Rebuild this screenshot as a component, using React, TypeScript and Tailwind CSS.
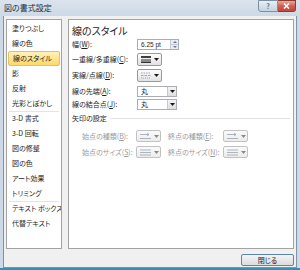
import type { ReactNode } from 'react';

const LIST: (string | null)[] = [
  '塗りつぶし',
  '線の色',
  '線のスタイル',
  '影',
  '反射',
  '光彩とぼかし',
  null,
  '3-D 書式',
  '3-D 回転',
  '図の修整',
  '図の色',
  'アート効果',
  'トリミング',
  null,
  'テキスト ボックス',
  '代替テキスト',
];

function Caret({ gray = false }: { gray?: boolean }) {
  return (
    <svg width="5" height="3" viewBox="0 0 5 3" className="shrink-0">
      <path d="M0 0h5L2.5 3z" fill={gray ? '#8a8a8a' : '#1a1a1a'} />
    </svg>
  );
}

// label with an underlined access key, e.g. 幅(W):
function Label({ text, keyChar, gray = false }: { text: string; keyChar: string; gray?: boolean }) {
  return (
    <span className={gray ? 'text-[#9a9a9a]' : 'text-[#1e1e1e]'}>
      {text}(<span className="underline">{keyChar}</span>):
    </span>
  );
}

function DropButton({ children, gray = false }: { children: ReactNode; gray?: boolean }) {
  return (
    <div
      className={`flex items-center gap-[3px] w-[25px] h-full pl-[3px] rounded-[2px] border ${
        gray ? 'border-[#c2c2c2] bg-gradient-to-b from-[#fafafa] to-[#ececec]' : 'border-[#9a9a9a] bg-gradient-to-b from-[#fdfdfd] to-[#e2e2e2]'
      }`}
    >
      {children}
      <Caret gray={gray} />
    </div>
  );
}

function Combo({ value }: { value: string }) {
  return (
    <div className="flex w-[40px] h-[11px] border border-[#abadb3] bg-white">
      <span className="flex-1 pl-[3px] leading-[9px] text-[7px]">{value}</span>
      <div className="flex items-center justify-center w-[9px] border-l border-[#c9c9c9] bg-gradient-to-b from-[#f4f4f4] to-[#dedede]">
        <Caret />
      </div>
    </div>
  );
}

function ArrowTypeIcon() {
  return (
    <svg width="11" height="7" viewBox="0 0 11 7">
      <path d="M0 1.5h9M7 0l2 1.5L7 3M0 5.5h11" stroke="#9aa3ad" strokeWidth="0.8" fill="none" />
    </svg>
  );
}

function SizeIcon() {
  return (
    <svg width="11" height="7" viewBox="0 0 11 7">
      <path d="M0 1h11M0 3.5h11M0 6h11" stroke="#9aa3ad" strokeWidth="0.8" />
    </svg>
  );
}

export default function App() {
  return (
    <div className="w-[300px] h-[270px] flex flex-col bg-[#cdd9e6] border-b-2 border-[#3f8cb0] font-['Noto_Sans_CJK_JP','Noto_Sans',sans-serif] [font-feature-settings:'palt'] text-[7px] text-[#1e1e1e] overflow-hidden">
      {/* Title bar */}
      <div className="flex h-[16px] shrink-0 bg-gradient-to-b from-[#dbe4ee] to-[#cdd9e6]">
        <span className="pl-[4px] pt-[2px] text-[8px] leading-[11px] text-[#1e2a38]">図の書式設定</span>
        <div className="ml-auto mr-[4px] flex h-[12px]">
          <div className="flex items-center justify-center w-[20px] border border-[#7d8fa3] rounded-bl-[3px] bg-gradient-to-b from-[#e8eef5] to-[#c6d3e1] text-[7px] font-bold text-[#5b6d80]">
            ?
          </div>
          <div className="flex items-center justify-center w-[18px] border border-l-0 border-[#8d3a32] rounded-br-[3px] bg-gradient-to-b from-[#e9a99d] via-[#d0604f] to-[#c3473a]">
            <svg width="7" height="6" viewBox="0 0 7 6">
              <path d="M1 0.5l5 5M6 0.5l-5 5" stroke="white" strokeWidth="1.6" />
            </svg>
          </div>
        </div>
      </div>

      {/* Client area */}
      <div className="flex flex-col flex-1 mx-[3px] border-l border-r border-b border-[#7b93a9] bg-[#f0f0f0] pl-[2px] pr-[2px] pt-[2px]">
        <div className="flex gap-[6px] h-[230px] mt-px">
          {/* Category list */}
          <div className="w-[56px] shrink-0 border border-[#a3a3a3] bg-white pt-px overflow-hidden">
            {LIST.map((item, i) =>
              item === null ? (
                <div key={i} className="mx-[2px] h-px bg-[#e4e4e4] -mb-px" />
              ) : item === '線のスタイル' ? (
                <div
                  key={i}
                  className="mx-px flex items-center h-[15px] pl-[4px] rounded-[2px] border border-[#e2c064] bg-gradient-to-b from-[#fff1b8] to-[#fdd866] whitespace-nowrap"
                >
                  {item}
                </div>
              ) : (
                <div key={i} className="flex items-center h-[15px] pl-[5px] whitespace-nowrap">
                  {item}
                </div>
              ),
            )}
          </div>

          {/* Settings pane */}
          <div className="flex-1 border border-[#a3a3a3] bg-white pl-[3px] pr-[2px] pt-[4px]">
            <div className="text-[10px] leading-[13px] text-[#1e1e1e]">線のスタイル</div>

            <div className="flex items-center h-[11px] mt-[2px]">
              <div className="w-[65px] shrink-0">
                <Label text="幅" keyChar="W" />
              </div>
              <div className="flex w-[42px] h-[11px] border border-[#abadb3] bg-white">
                <span className="flex-1 pl-[3px] leading-[9px] font-['Liberation_Sans',sans-serif] text-[6.5px]">6.25 pt</span>
                <div className="flex flex-col w-[8px] border-l border-[#c5ccd4]">
                  <div className="flex-1 flex items-center justify-center bg-[#e6edf5] border-b border-[#c5ccd4]">
                    <svg width="4" height="2" viewBox="0 0 4 2">
                      <path d="M0 2h4L2 0z" fill="#6b7c8e" />
                    </svg>
                  </div>
                  <div className="flex-1 flex items-center justify-center bg-[#e6edf5]">
                    <svg width="4" height="2" viewBox="0 0 4 2">
                      <path d="M0 0h4L2 2z" fill="#6b7c8e" />
                    </svg>
                  </div>
                </div>
              </div>
            </div>

            <div className="flex items-center h-[13px] mt-[3px]">
              <div className="w-[65px] shrink-0">
                <Label text="一重線/多重線" keyChar="C" />
              </div>
              <DropButton>
                <svg width="10" height="7" viewBox="0 0 10 7">
                  <path d="M0 1h10" stroke="#111" strokeWidth="1.6" />
                  <path d="M0 4h10" stroke="#111" strokeWidth="0.9" />
                  <path d="M0 6.2h10" stroke="#111" strokeWidth="1.3" />
                </svg>
              </DropButton>
            </div>

            <div className="flex items-center h-[13px] mt-[3px]">
              <div className="w-[65px] shrink-0">
                <Label text="実線/点線" keyChar="D" />
              </div>
              <DropButton>
                <svg width="10" height="7" viewBox="0 0 10 7">
                  <path d="M0 1h10" stroke="#8aa0bd" strokeWidth="0.9" strokeDasharray="1.5 1" />
                  <path d="M0 3.5h10" stroke="#8aa0bd" strokeWidth="0.9" strokeDasharray="2.5 1" />
                  <path d="M0 6h10" stroke="#8aa0bd" strokeWidth="0.9" strokeDasharray="1 1" />
                </svg>
              </DropButton>
            </div>

            <div className="flex items-center h-[11px] mt-[4px]">
              <div className="w-[65px] shrink-0">
                <Label text="線の先端" keyChar="A" />
              </div>
              <Combo value="丸" />
            </div>

            <div className="flex items-center h-[11px] mt-[2px]">
              <div className="w-[65px] shrink-0">
                <Label text="線の結合点" keyChar="J" />
              </div>
              <Combo value="丸" />
            </div>

            <div className="flex items-center gap-[3px] h-[10px] mt-[3px]">
              <span className="whitespace-nowrap">矢印の設定</span>
              <div className="flex-1 h-px bg-[#e2e2e2] mr-[1px]" />
            </div>

            <div className="flex items-center h-[12px] mt-[7px] pl-[10px]">
              <div className="w-[54px] shrink-0 whitespace-nowrap">
                <Label text="始点の種類" keyChar="B" gray />
              </div>
              <DropButton gray>
                <ArrowTypeIcon />
              </DropButton>
              <div className="w-[55px] shrink-0 ml-[7px] whitespace-nowrap">
                <Label text="終点の種類" keyChar="E" gray />
              </div>
              <DropButton gray>
                <ArrowTypeIcon />
              </DropButton>
            </div>

            <div className="flex items-center h-[12px] mt-[4px] pl-[10px]">
              <div className="w-[54px] shrink-0 whitespace-nowrap">
                <Label text="始点のサイズ" keyChar="S" gray />
              </div>
              <DropButton gray>
                <SizeIcon />
              </DropButton>
              <div className="w-[55px] shrink-0 ml-[7px] whitespace-nowrap">
                <Label text="終点のサイズ" keyChar="N" gray />
              </div>
              <DropButton gray>
                <SizeIcon />
              </DropButton>
            </div>
          </div>
        </div>

        {/* Footer */}
        <div className="flex justify-end mt-[5px]">
          <button className="w-[53px] h-[12px] flex items-center justify-center rounded-[2px] border border-[#5a86b0] bg-gradient-to-b from-[#f4f4f4] to-[#dcdcdc] text-[7px] leading-none text-[#1e1e1e]">
            閉じる
          </button>
        </div>
      </div>
    </div>
  );
}
